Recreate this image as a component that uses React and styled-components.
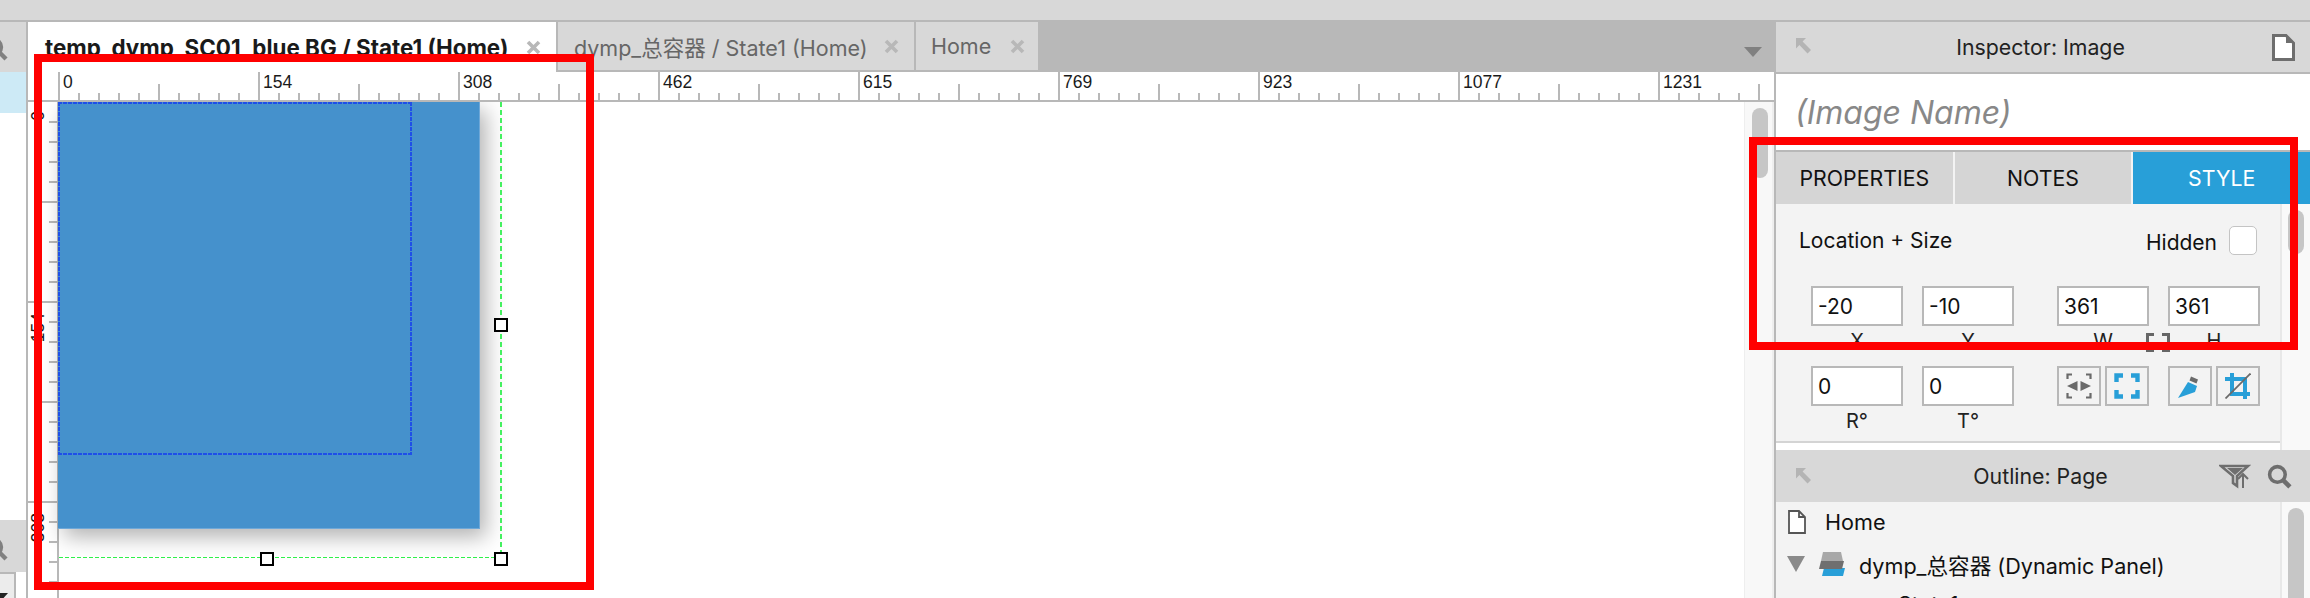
import React from 'react';
import styled, { createGlobalStyle } from 'styled-components';

const UI = `Inter, "Noto Sans CJK SC", sans-serif`;
const LINE = '#b8b8b8';
const PANEL = '#d8d8d8';

const Global = createGlobalStyle`
  html, body { margin: 0; padding: 0; background: #fff; overflow: hidden; }
  #root { width: 2310px; height: 598px; }
  * { box-sizing: border-box; }
`;

const Page = styled.div`
  position: relative; width: 2310px; height: 598px; overflow: hidden;
  display: flex; flex-direction: column; font-family: ${UI}; color: #1a1a1a;
`;
const TopBar = styled.div`height: 22px; flex: none; background: ${PANEL}; border-bottom: 2px solid ${LINE};`;
const Main = styled.div`flex: 1; min-height: 0; display: flex;`;

/* left sliver */
const LeftColumn = styled.div`
  width: 28px; flex: none; display: flex; flex-direction: column;
  background: #fff; border-right: 2px solid ${LINE}; overflow: hidden;
`;
const LeftHead = styled.div`
  height: ${p => p.$h}px; flex: none; background: ${PANEL}; position: relative; overflow: hidden;
  & > svg { position: absolute; left: -16px; top: ${p => p.$iconTop}px; }
`;
const LeftSelected = styled.div`height: 41px; flex: none; background: #cdeaf6;`;
const LeftFill = styled.div`flex: 1;`;
const LeftFoot = styled.div`
  height: 26px; width: 16px; flex: none; background: #ececec; position: relative;
  border-top: 2px solid ${LINE}; border-right: 2px solid ${LINE}; overflow: hidden;
  &::after { content: ''; position: absolute; left: -8px; top: 19px;
    border-left: 8px solid transparent; border-right: 8px solid transparent; border-top: 9px solid #222; }
`;

/* centre */
const Center = styled.div`flex: 1; min-width: 0; display: flex; flex-direction: column;`;
const TabBar = styled.div`height: 50px; flex: none; display: flex; background: ${LINE}; position: relative;`;
const Tab = styled.div`
  width: ${p => p.$w}px; flex: none; display: flex; align-items: center; justify-content: space-between;
  padding: 0 ${p => p.$end}px 0 ${p => p.$pad}px; white-space: nowrap;
  font-size: ${p => p.$active ? 22.4 : 21.5}px;
  background: ${p => p.$active ? '#fff' : PANEL};
  color: ${p => p.$active ? '#1a1a1a' : '#666'};
  font-weight: ${p => p.$active ? 700 : 400};
  border-right: 2px solid ${LINE};
  border-bottom: ${p => p.$active ? 'none' : `2px solid ${LINE}`};
`;
const TabClose = styled.svg`width: 15px; height: 15px; flex: none;`;
const TabMenu = styled.div`
  position: absolute; right: 12px; top: 25px; width: 0; height: 0;
  border-left: 9px solid transparent; border-right: 9px solid transparent; border-top: 10px solid #808080;
`;

const HRuler = styled.div`height: 30px; flex: none; position: relative; background: #fff; & > svg { display: block; }`;
const HLabel = styled.span`
  position: absolute; left: ${p => p.$x}px; top: -2px; font: 17.5px/24px "Liberation Sans", sans-serif; color: #1a1a1a;
`;
const Stage = styled.div`flex: 1; min-height: 0; position: relative; overflow: hidden; background: #fff;`;
const VRuler = styled.div`
  position: absolute; left: 0; top: 0; bottom: 0; width: 31px; & > svg { display: block; }
`;
const VLabel = styled.span`
  position: absolute; left: 2px; top: ${p => p.$y}px; writing-mode: vertical-rl; transform: rotate(180deg);
  font: 17.5px/16px "Liberation Sans", sans-serif; color: #1a1a1a;
`;
const Picture = styled.div`
  position: absolute; left: 30px; top: 0; width: 422px; height: 427px;
  background: #4591cc; border-right: 1px solid #6fa8d8; border-bottom: 1px solid #6fa8d8;
  box-shadow: 6px 8px 20px rgba(0,0,0,.3);
`;
const dashH = 'repeating-linear-gradient(90deg, #1f4fe8 0 4px, transparent 4px 5px)';
const dashV = 'repeating-linear-gradient(180deg, #1f4fe8 0 4px, transparent 4px 5px)';
const Selection = styled.div`
  position: absolute; left: 30px; top: 0; width: 354px; height: 353px;
  background:
    ${dashH} left top / 100% 2px no-repeat,
    ${dashH} left bottom / 100% 2px no-repeat,
    ${dashV} left top / 2px 100% no-repeat,
    ${dashV} right top / 2px 100% no-repeat;
`;
const GuideV = styled.div`
  position: absolute; left: 472px; top: 0; height: 455px; width: 2px;
  background: repeating-linear-gradient(180deg, #44f060 0 5px, transparent 5px 8px);
`;
const GuideH = styled.div`
  position: absolute; left: 31px; top: 455px; width: 441px; height: 1px;
  background: repeating-linear-gradient(90deg, #2ff04a 0 4px, transparent 4px 6px);
`;
const Handle = styled.div`
  position: absolute; left: ${p => p.$x}px; top: ${p => p.$y}px; width: 14px; height: 14px;
  background: #fff; border: 2px solid #000;
`;
const StageScroll = styled.div`
  position: absolute; right: 0; top: 0; bottom: 0; width: 30px; background: #f8f8f8;
  border-left: 1px solid #eee; border-right: 2px solid #eee;
`;
const Thumb = styled.div`
  position: absolute; left: ${p => p.$x}px; top: ${p => p.$top}px; width: 16px; height: ${p => p.$h}px;
  background: #c6c6c6; border-radius: 8px;
`;

/* right panel */
const Right = styled.div`
  width: 536px; flex: none; display: flex; flex-direction: column;
  border-left: 2px solid ${LINE}; background: #fff; position: relative;
`;
const PanelHead = styled.div`
  height: ${p => p.$h}px; flex: none; background: ${PANEL}; position: relative;
  display: flex; align-items: center; justify-content: center; font-size: 21.3px; color: #222;
  border-bottom: ${p => p.$line ? `2px solid ${LINE}` : 'none'};
`;
const PanelTitle = styled.span`margin-left: ${p => p.$shift}px;`;
const HeadIcon = styled.svg`position: absolute; left: ${p => p.$x}px; top: ${p => p.$y}px;`;
const HeadIconBox = styled.div`
  position: absolute; left: ${p => p.$x}px; top: ${p => p.$y}px; line-height: 0;
`;
const NameField = styled.div`
  height: 78px; flex: none; padding: 0 0 0 19px; display: flex; align-items: center;
  font-size: 32px; font-style: italic; color: #888; border-bottom: 2px solid ${LINE};
`;
const TabRow = styled.div`height: 52px; flex: none; display: flex; gap: 2px; background: #f3f3f3;`;
const InspectorTab = styled.div`
  flex: 1; display: flex; align-items: center; justify-content: center; font-size: 21.3px;
  background: ${p => p.$on ? '#289fd8' : '#d5d5d5'}; color: ${p => p.$on ? '#fff' : '#111'};
`;
const BodyRow = styled.div`flex: ${p => p.$grow ? 1 : 'none'}; height: ${p => p.$h}px; min-height: 0; display: flex; overflow: hidden;`;
const Body = styled.div`
  flex: 1; min-width: 0; background: #f3f3f3; overflow: hidden; position: relative;
  border-bottom: ${p => p.$line ? '2px solid #d4d4d4' : 'none'};
  padding: ${p => p.$pad};
  margin-bottom: ${p => p.$line ? 7 : 0}px;
`;
const SideScroll = styled.div`
  width: 30px; flex: none; background: #f9f9f9; border-left: 2px solid #e8e8e8; position: relative;
`;
const SectionHead = styled.div`
  display: flex; justify-content: space-between; align-items: center; height: 34px; font-size: 21px; color: #111;
  padding: 0 23px 0 23px; margin-bottom: 29px;
`;
const HiddenWrap = styled.div`display: flex; align-items: center; gap: 12px;`;
const HiddenText = styled.span`font-size: 21px; margin-top: 4px;`;
const Check = styled.div`width: 28px; height: 29px; background: #fff; border: 1px solid #c4c4c4; border-radius: 5px;`;
const FieldGrid = styled.div`
  display: grid; grid-template-columns: repeat(4, 92px); column-gap: 19px; padding-left: 35px;
  justify-items: start;
  & > :nth-child(4n+3), & > :nth-child(4n+4) { margin-left: 24px; }
`;
const Field = styled.div`display: flex; flex-direction: column; align-items: center; height: 80px; width: 92px;`;
const Input = styled.div`
  width: 92px; height: 40px; flex: none; background: #fff; border: 2px solid ${LINE};
  display: flex; align-items: center; padding-left: 5px; font-size: 21px; color: #111;
`;
const FieldLabel = styled.div`font-size: 20px; line-height: 30px; color: #222;`;
const IconPair = styled.div`display: flex; gap: 4px; align-items: flex-start; width: 92px;`;
const IconBtn = styled.div`
  width: 44px; height: 40px; flex: none; border: 2px solid ${LINE}; background: #f3f3f3;
  display: flex; align-items: center; justify-content: center;
`;
const LinkIcon = styled.svg`position: absolute; left: 370px; top: 129px;`;
const OutlineRow = styled.div`
  height: ${p => p.$h}px; display: flex; align-items: center; font-size: 21.6px; color: #111; white-space: nowrap;
  padding-left: ${p => p.$pad}px; gap: ${p => p.$gap}px;
`;

/* annotations */
const RedBox = styled.div`
  position: absolute; left: ${p => p.$x}px; top: ${p => p.$y}px; width: ${p => p.$w}px; height: ${p => p.$h}px;
  border: 8px solid #ff0000; pointer-events: none;
`;

const Search = ({ size = 24, color = '#808080' }) => (
  <svg width={size} height={size} viewBox="0 0 24 24" fill="none" stroke={color} strokeWidth="3.4">
    <circle cx="10" cy="10" r="7.5" />
    <path d="M15.5 15.5 L22 22" strokeWidth="4.4" />
  </svg>
);
const Close = () => (
  <TabClose viewBox="0 0 15 15"><path d="M2 2 L13 13 M13 2 L2 13" stroke="#b8b8b8" strokeWidth="3.6" /></TabClose>
);
const Pin = ({ x, y }) => (
  <HeadIcon $x={x} $y={y} width="17" height="18" viewBox="0 0 17 18">
    <path d="M1 1 H11 L7.6 4.4 L16 13 L12.5 16.6 L4.4 8 L1 11.5 Z" fill="#b4b4b4" />
  </HeadIcon>
);

const hTicks = [];
for (let x = 0; x < 1746; x += 20) {
  const off = x + 31;
  const top = x % 200 === 0 ? 0 : x % 100 === 0 ? 12 : 21;
  hTicks.push(<rect key={x} x={off - 1} y={top} width="2" height={28 - top} fill={LINE} />);
}
const vTicks = [];
for (let y = 20; y < 500; y += 20) {
  const left = y % 200 === 0 ? 0 : y % 100 === 0 ? 6 : 21;
  vTicks.push(<rect key={y} x={left} y={y - 1} width={29 - left} height="2" fill={LINE} />);
}

const hLabels = [[0, 35], [154, 235], [308, 435], [462, 635], [615, 835], [769, 1035], [923, 1235], [1077, 1435], [1231, 1635]];
const vLabels = [[0, 9], [154, 211], [308, 411]];
const fields = [['-20', 'X'], ['-10', 'Y'], ['361', 'W'], ['361', 'H']];
const fields2 = [['0', 'R°'], ['0', 'T°']];

export default function App() {
  return (
    <Page>
      <Global />
      <TopBar />
      <Main>
        <LeftColumn>
          <LeftHead $h={50} $iconTop={15}><Search /></LeftHead>
          <LeftSelected />
          <LeftFill />
          <LeftHead $h={52} $iconTop={17}><Search /></LeftHead>
          <LeftFoot />
        </LeftColumn>

        <Center>
          <TabBar>
            <Tab $active $w={530} $pad={17} $end={15}>temp_dymp_SC01_blue BG / State1 (Home)<Close /></Tab>
            <Tab $w={358} $pad={16} $end={15}>dymp_总容器 / State1 (Home)<Close /></Tab>
            <Tab $w={124} $pad={15} $end={13}>Home<Close /></Tab>
            <TabMenu />
          </TabBar>
          <HRuler>
            <svg width="1746" height="30">
              {hTicks}
              <rect x="0" y="28" width="1746" height="2" fill={LINE} />
            </svg>
            {hLabels.map(([t, x]) => <HLabel key={t} $x={x}>{t}</HLabel>)}
          </HRuler>
          <Stage>
            <VRuler>
              <svg width="31" height="496">
                {vTicks}
                <rect x="29" y="0" width="2" height="496" fill={LINE} />
              </svg>
              {vLabels.map(([t, y]) => <VLabel key={t} $y={y}>{t}</VLabel>)}
            </VRuler>
            <Picture />
            <Selection />
            <GuideV />
            <GuideH />
            <Handle $x={466} $y={216} />
            <Handle $x={232} $y={450} />
            <Handle $x={466} $y={450} />
            <StageScroll><Thumb $x={7} $top={6} $h={70} /></StageScroll>
          </Stage>
        </Center>

        <Right>
          <PanelHead $h={52} $line>
            <Pin x={19} y={15} />
            <PanelTitle $shift={-5}>Inspector: Image</PanelTitle>
            <HeadIcon $x={496} $y={12} width="23" height="27" viewBox="0 0 23 27">
              <path d="M1.5 1.5 H14 L21.5 9 V25.5 H1.5 Z" fill="#fff" stroke="#6e6e6e" strokeWidth="3" />
              <path d="M14 1 V9 H22 Z" fill="#6e6e6e" />
            </HeadIcon>
          </PanelHead>
          <NameField>(Image Name)</NameField>
          <TabRow>
            <InspectorTab>PROPERTIES</InspectorTab>
            <InspectorTab>NOTES</InspectorTab>
            <InspectorTab $on>STYLE</InspectorTab>
          </TabRow>
          <BodyRow $h={246}>
            <Body $line $pad="19px 0 0 0">
              <SectionHead>
                <span>Location + Size</span>
                <HiddenWrap><HiddenText>Hidden</HiddenText><Check /></HiddenWrap>
              </SectionHead>
              <FieldGrid>
                {fields.map(([v, l], i) => (
                  <Field key={i}><Input>{v}</Input><FieldLabel>{l}</FieldLabel></Field>
                ))}
                {fields2.map(([v, l], i) => (
                  <Field key={i}><Input>{v}</Input><FieldLabel>{l}</FieldLabel></Field>
                ))}
                <IconPair>
                  <IconBtn>
                    <svg width="26" height="26" viewBox="0 0 26 26" fill="none">
                      <path d="M6 1.5 H1.5 V6 M20 1.5 H24.5 V6 M6 24.5 H1.5 V20 M20 24.5 H24.5 V20" stroke="#6a6a6a" strokeWidth="2.2" />
                      <path d="M11.5 8 V18 L1 13 Z M14.5 8 V18 L25 13 Z" fill="#6a6a6a" />
                    </svg>
                  </IconBtn>
                  <IconBtn>
                    <svg width="26" height="26" viewBox="0 0 26 26" fill="none">
                      <path d="M9 2.5 H2.5 V9 M17 2.5 H23.5 V9 M9 23.5 H2.5 V17 M17 23.5 H23.5 V17" stroke="#289fd8" strokeWidth="4.4" />
                    </svg>
                  </IconBtn>
                </IconPair>
                <IconPair>
                  <IconBtn>
                    <svg width="26" height="26" viewBox="0 0 26 26">
                      <path d="M1 25 L11 9 L20 13 L18 19 Z" fill="#289fd8" />
                      <path d="M14 3.5 L21 6.5 L19.5 10.5 L12.5 7.5 Z" fill="#6a6a6a" />
                    </svg>
                  </IconBtn>
                  <IconBtn>
                    <svg width="26" height="26" viewBox="0 0 26 26" fill="none">
                      <path d="M7 0 V21 H25 M0 6 H20 V26" stroke="#289fd8" strokeWidth="4" />
                      <path d="M0.5 25.5 L25.5 0.5" stroke="#6a6a6a" strokeWidth="1.8" />
                    </svg>
                  </IconBtn>
                </IconPair>
              </FieldGrid>
              <LinkIcon width="24" height="19" viewBox="0 0 24 19" fill="none">
                <path d="M8 1.5 H1.5 V17.5 H8 M16 1.5 H22.5 V17.5 H16" stroke="#666" strokeWidth="3" />
              </LinkIcon>
            </Body>
            <SideScroll><Thumb $x={6} $top={6} $h={44} /></SideScroll>
          </BodyRow>
          <PanelHead $h={52}>
            <Pin x={19} y={17} />
            <PanelTitle $shift={-5}>Outline: Page</PanelTitle>
            <HeadIcon $x={443} $y={14} width="32" height="25" viewBox="0 0 32 25" fill="none">
              <path d="M2 2 H29 L18 12 V22 L14 19 V12 Z" stroke="#6e6e6e" strokeWidth="2.6" />
              <path d="M8 4 H24 L16 11 Z" fill="#6e6e6e" />
              <path d="M24 24 V10 M19 15 L24 10 L29 15" stroke="#6e6e6e" strokeWidth="2" />
            </HeadIcon>
            <HeadIconBox $x={491} $y={14}><Search size={25} color="#6e6e6e" /></HeadIconBox>
          </PanelHead>
          <BodyRow $grow>
            <Body $pad="0">
              <OutlineRow $h={39} $pad={12} $gap={19}>
                <svg width="18" height="24" viewBox="0 0 18 24">
                  <path d="M1 1 H11 L17 7 V23 H1 Z M11 1 V7 H17" fill="#fff" stroke="#555" strokeWidth="1.8" />
                </svg>
                Home
              </OutlineRow>
              <OutlineRow $h={46} $pad={11} $gap={13}>
                <svg width="18" height="16" viewBox="0 0 18 16"><path d="M0 0 H18 L9 16 Z" fill="#8a8a8a" /></svg>
                <svg width="28" height="24" viewBox="0 0 28 24">
                  <path d="M6 16 H27 L25 24 H4 Z" fill="#289fd8" />
                  <path d="M3 9 H26 L24 17 H1 Z" fill="#6f6f6f" />
                  <path d="M5 0 H23 L25 9 H3 Z" fill="#a8a8a8" />
                </svg>
                <span>dymp_总容器 (Dynamic Panel)</span>
              </OutlineRow>
              <OutlineRow $h={33} $pad={122} $gap={0}>State1</OutlineRow>
            </Body>
            <SideScroll><Thumb $x={6} $top={6} $h={120} /></SideScroll>
          </BodyRow>
        </Right>
      </Main>
      <RedBox $x={34} $y={54} $w={560} $h={536} />
      <RedBox $x={1749} $y={137} $w={549} $h={213} />
    </Page>
  );
}
